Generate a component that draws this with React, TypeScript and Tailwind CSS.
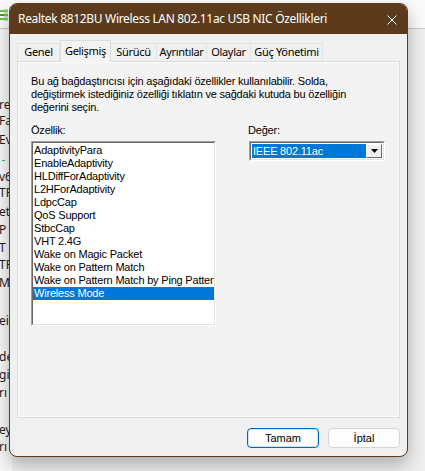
import React from "react";

const TITLE_BROWN = "bg-[#5b3b1b]";

const tabs = [
  { label: "Genel", w: "w-[43px]" },
  { label: "Gelişmiş", w: "w-[51px]", active: true },
  { label: "Sürücü", w: "w-[46px]" },
  { label: "Ayrıntılar", w: "w-[50px]" },
  { label: "Olaylar", w: "w-[44px]" },
  { label: "Güç Yönetimi", w: "w-[72px]" },
];

const props = [
  "AdaptivityPara",
  "EnableAdaptivity",
  "HLDiffForAdaptivity",
  "L2HForAdaptivity",
  "LdpcCap",
  "QoS Support",
  "StbcCap",
  "VHT 2.4G",
  "Wake on Magic Packet",
  "Wake on Pattern Match",
  "Wake on Pattern Match by Ping Pattern",
  "Wireless Mode",
];

// text of the window lying behind the dialog, cut by the screen edge
function BackWindow() {
  const frag = "absolute left-[-1px] text-[12px] leading-[14px] text-[#1b1b1b]";
  return (
    <>
      <div className="absolute left-0 top-0 h-[29px] w-full border-b border-[#c9c9c9] bg-[#fafafa]">
        <svg className="absolute left-0 top-[9px]" width="9" height="12" viewBox="0 0 9 12">
          <rect x="0" y="1" width="8" height="2" fill="#6cc04a" />
          <rect x="0" y="5" width="8" height="2" fill="#3f9a2e" />
          <rect x="0" y="9" width="8" height="2" fill="#6cc04a" />
          <rect x="4" y="0" width="4" height="12" fill="#8fd06d" opacity="0.5" />
        </svg>
      </div>
      <div className="absolute bottom-0 left-0 top-[30px] w-[12px] bg-[#f7f7f7] font-['Noto_Sans',sans-serif]">
        <span className={`${frag} top-[68px]`}>re</span>
        <span className={`${frag} top-[84px]`}>Fa</span>
        <span className={`${frag} top-[103px]`}>Ev</span>
        <span className="absolute left-[2px] top-[130px] h-[1px] w-[3px] bg-[#4aa3a3]" />
        <span className={`${frag} top-[140px]`}>v6</span>
        <span className={`${frag} top-[156px]`}>TP</span>
        <span className={`${frag} top-[175px]`}>etv</span>
        <span className={`${frag} top-[193px]`}>P</span>
        <span className={`${frag} top-[211px]`}>T</span>
        <span className={`${frag} top-[228px]`}>TF</span>
        <span className={`${frag} top-[246px]`}>M</span>
        <span className={`${frag} top-[284px]`}>ei</span>
        <span className={`${frag} top-[320px]`}>de</span>
        <span className={`${frag} top-[338px]`}>gi</span>
        <span className={`${frag} top-[356px]`}>rı</span>
        <span className={`${frag} top-[393px]`}>ey</span>
        <span className={`${frag} top-[410px]`}>rı</span>
      </div>
    </>
  );
}

function Sunken({ className, children }: { className?: string; children: React.ReactNode }) {
  return (
    <div className={`border border-t-[#a0a0a0] border-l-[#a0a0a0] border-b-white border-r-white ${className ?? ""}`}>
      <div className="h-full w-full border border-t-[#696969] border-l-[#696969] border-b-[#e3e3e3] border-r-[#e3e3e3] bg-white">
        {children}
      </div>
    </div>
  );
}

export default function App() {
  const classic = "font-['Liberation_Sans',Arial,sans-serif] text-[11px] leading-[13px] tracking-[-0.2px]";
  return (
    <div className="relative h-[471px] w-[425px] overflow-hidden bg-[#efefef]">
      <BackWindow />

      <div className="absolute left-[9px] top-[3px] flex h-[454px] w-[399px] flex-col overflow-hidden rounded-[8px] border border-[#5b3b1b] bg-[#f0f0f0] shadow-[0_8px_18px_rgba(0,0,0,0.28)]">
        {/* title bar */}
        <div className={`flex h-[30px] shrink-0 items-center justify-between pl-[8px] pr-[10px] ${TITLE_BROWN}`}>
          <span className="font-['Noto_Sans',sans-serif] text-[12px] tracking-[-0.32px] text-white">
            Realtek 8812BU Wireless LAN 802.11ac USB NIC Özellikleri
          </span>
          <svg width="10" height="10" viewBox="0 0 10 10" className="mt-[1px]">
            <path d="M0.5 0.5 L9.5 9.5 M9.5 0.5 L0.5 9.5" stroke="#ffffff" strokeWidth="1" />
          </svg>
        </div>

        <div className="flex flex-1 flex-col px-[7px]">
          {/* tabs */}
          <div className="mt-[6px] flex h-[21px] items-end whitespace-nowrap font-['Noto_Sans',sans-serif] text-[11px] tracking-[-0.3px] text-black">
            {tabs.map((t) =>
              t.active ? (
                <div
                  key={t.label}
                  className={`relative z-10 -mb-[1px] flex h-[22px] ${t.w} items-start justify-center border border-b-0 border-[#dcdcdc] bg-[#f3f3f3] pt-[2px]`}
                >
                  {t.label}
                </div>
              ) : (
                <div
                  key={t.label}
                  className={`flex h-[18px] ${t.w} items-center justify-center border border-b-0 border-l-0 border-[#e3e3e3] first:border-l`}
                >
                  {t.label}
                </div>
              )
            )}
          </div>

          {/* tab page */}
          <div className={`flex h-[357px] flex-col border border-[#dcdcdc] bg-[#f3f3f3] px-[13px] pt-[13px] text-black shadow-[inset_0_0_0_1px_#fbfbfb] ${classic}`}>
            <p>
              Bu ağ bağdaştırıcısı için aşağıdaki özellikler kullanılabilir. Solda,
              <br />
              değiştirmek istediğiniz özelliği tıklatın ve sağdaki kutuda bu özelliğin
              <br />
              değerini seçin.
            </p>

            <div className="mt-[10px] flex">
              <div className="flex w-[185px] flex-col">
                <span>Özellik:</span>
                <Sunken className="mt-[4px] h-[185px] w-[185px]">
                  <ul className="overflow-hidden pt-[1px]">
                    {props.map((p) => (
                      <li
                        key={p}
                        className={`h-[13px] whitespace-nowrap pl-[1px] ${p === "Wireless Mode" ? "bg-[#0078d7] text-white" : ""}`}
                      >
                        {p}
                      </li>
                    ))}
                  </ul>
                </Sunken>
              </div>

              <div className="ml-[32px] flex flex-col">
                <span>Değer:</span>
                <Sunken className="ml-[1px] mt-[4px] h-[20px] w-[136px]">
                  <div className="flex h-full p-[1px]">
                    <div className="flex flex-1 items-center bg-[#0078d7] pl-[1px] text-white">IEEE 802.11ac</div>
                    <div className="flex w-[16px] items-center justify-center border border-t-white border-l-white border-b-[#696969] border-r-[#696969] bg-[#f0f0f0]">
                      <svg width="7" height="4" viewBox="0 0 7 4">
                        <path d="M0 0 H7 L3.5 4 Z" fill="#000" />
                      </svg>
                    </div>
                  </div>
                </Sunken>
              </div>
            </div>
          </div>

          {/* buttons */}
          <div className={`mt-[10px] flex justify-end gap-[9px] ${classic} tracking-normal`}>
            <button className="flex h-[20px] w-[72px] items-center justify-center rounded-[4px] border border-[#0067c0] bg-[#fdfdfd] text-black shadow-[inset_0_0_0_1px_#cfe1f3]">
              Tamam
            </button>
            <button className="flex h-[20px] w-[72px] items-center justify-center rounded-[4px] border border-[#d3d3d3] bg-[#fdfdfd] text-black">
              İptal
            </button>
          </div>
        </div>
      </div>
    </div>
  );
}
